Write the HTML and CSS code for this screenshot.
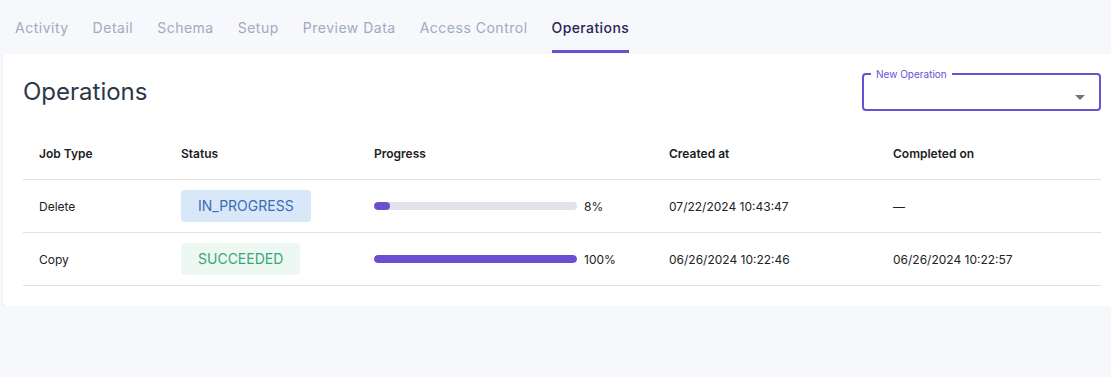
FILE: index.html
```html
<!DOCTYPE html>
<html lang="en">
<head>
    <meta charset="UTF-8">
    <meta name="viewport" content="width=device-width, initial-scale=1.0">
    <title>Operations</title>
    <link rel="stylesheet" href="styles.css">
</head>
<body>
    <nav class="tabs">
        <a class="tab">Activity</a>
        <a class="tab">Detail</a>
        <a class="tab">Schema</a>
        <a class="tab">Setup</a>
        <a class="tab">Preview Data</a>
        <a class="tab">Access Control</a>
        <a class="tab active">Operations</a>
    </nav>

    <div class="card">
        <div class="card-header">
            <h2>Operations</h2>
            <fieldset class="select">
                <legend>New Operation</legend>
                <svg class="arrow" viewBox="0 0 24 24" width="24" height="24"><path d="M7 10l5 5 5-5z"/></svg>
            </fieldset>
        </div>

        <table class="ops">
            <colgroup>
                <col class="c-type">
                <col class="c-status">
                <col class="c-progress">
                <col class="c-date">
                <col class="c-date">
            </colgroup>
            <thead>
                <tr>
                    <th>Job Type</th>
                    <th>Status</th>
                    <th>Progress</th>
                    <th>Created at</th>
                    <th>Completed on</th>
                </tr>
            </thead>
            <tbody>
                <tr>
                    <td>Delete</td>
                    <td><span class="badge progress">IN_PROGRESS</span></td>
                    <td>
                        <div class="bar-wrap">
                            <div class="bar"><div class="fill" style="width: 8%"></div></div>
                            <span>8%</span>
                        </div>
                    </td>
                    <td>07/22/2024 10:43:47</td>
                    <td>—</td>
                </tr>
                <tr>
                    <td>Copy</td>
                    <td><span class="badge done">SUCCEEDED</span></td>
                    <td>
                        <div class="bar-wrap">
                            <div class="bar"><div class="fill" style="width: 100%"></div></div>
                            <span>100%</span>
                        </div>
                    </td>
                    <td>06/26/2024 10:22:46</td>
                    <td>06/26/2024 10:22:57</td>
                </tr>
            </tbody>
        </table>
    </div>
</body>
</html>
```

FILE: styles.css
```css
body {
    font-family: Inter, "Noto Sans", sans-serif;
    margin: 0;
    background-color: #f7f8fc;
    color: #222;
    overflow: hidden;
}
.tabs {
    display: flex;
    margin-left: 3px;
    height: 54px;
}
.tab {
    margin: 0 12px;
    padding: 18px 0 12px;
    line-height: 20px;
    height: 20px;
    font-size: 14px;
    letter-spacing: 0.5px;
    color: #a1aac0;
    border-bottom: 3px solid transparent;
}
.tab.active {
    color: #2a2456;
    font-weight: 500;
    letter-spacing: 0.4px;
    border-bottom-color: #6c4ed1;
}
.card {
    margin-left: 3px;
    width: 1078px;
    padding: 20px;
    background-color: #fff;
    border-radius: 4px;
    box-shadow: 0 1px 2px rgba(0, 0, 0, 0.12);
}
.card-header {
    display: flex;
    justify-content: space-between;
    align-items: center;
    margin-bottom: 16px;
}
h2 {
    margin: 0 0 2px;
    font-size: 24px;
    font-weight: 400;
    color: #2d3748;
    line-height: 32px;
}
.select {
    position: relative;
    margin: -6px 0 0;
    padding: 0;
    width: 239px;
    height: 43px;
    border: 2px solid #6c4ed1;
    border-radius: 4px;
    box-sizing: border-box;
}
.select legend {
    margin-left: 7px;
    padding: 0 5px;
    font-size: 10px;
    line-height: 12px;
    color: #6c4ed1;
}
.arrow {
    position: absolute;
    right: 7px;
    top: 5px;
    fill: #757575;
}
.ops {
    width: 100%;
    border-collapse: collapse;
    font-size: 12px;
}
.c-type { width: 142px; }
.c-status { width: 193px; }
.c-progress { width: 295px; }
.c-date { width: 224px; }
.ops th,
.ops td {
    text-align: left;
    padding: 0 16px;
    height: 52px;
    border-bottom: 1px solid #e0e0e0;
}
.ops th {
    font-weight: 600;
    color: #1d1d1d;
}
.badge {
    display: inline-block;
    padding: 6px 17px;
    line-height: 20px;
    font-size: 14px;
    border-radius: 4px;
}
.badge.progress {
    background-color: #d9e8f8;
    color: #3a6cb5;
}
.badge.done {
    background-color: #edf8f3;
    color: #3aa57a;
}
.bar-wrap {
    display: flex;
    align-items: center;
    gap: 7px;
}
.bar {
    width: 203px;
    height: 8px;
    border-radius: 4px;
    background-color: #e1e3ec;
    overflow: hidden;
}
.fill {
    height: 100%;
    border-radius: 4px;
    background-color: #6c4ed1;
}
```
